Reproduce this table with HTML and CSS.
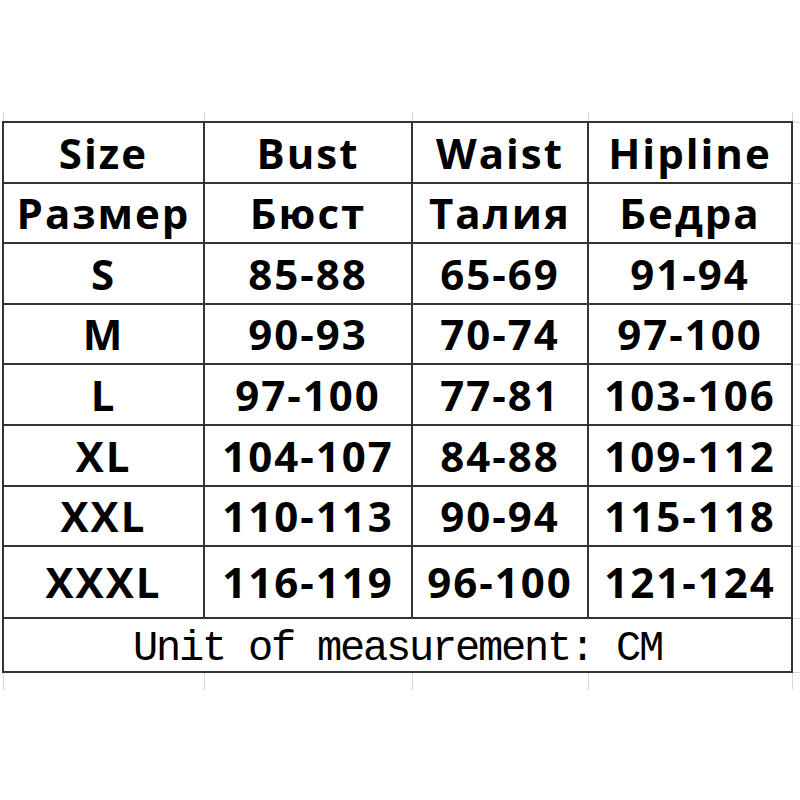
FILE: index.html
```html
<!DOCTYPE html>
<html>
<head>
<meta charset="utf-8">
<link rel="stylesheet" href="styles.css">
</head>
<body>
<div class="sheet">
  <div class="table">
    <div class="cell">Size</div><div class="cell">Bust</div><div class="cell">Waist</div><div class="cell">Hipline</div>
    <div class="cell">Размер</div><div class="cell">Бюст</div><div class="cell">Талия</div><div class="cell">Бедра</div>
    <div class="cell">S</div><div class="cell">85-88</div><div class="cell">65-69</div><div class="cell">91-94</div>
    <div class="cell">M</div><div class="cell">90-93</div><div class="cell">70-74</div><div class="cell">97-100</div>
    <div class="cell">L</div><div class="cell">97-100</div><div class="cell">77-81</div><div class="cell">103-106</div>
    <div class="cell">XL</div><div class="cell">104-107</div><div class="cell">84-88</div><div class="cell">109-112</div>
    <div class="cell">XXL</div><div class="cell">110-113</div><div class="cell">90-94</div><div class="cell">115-118</div>
    <div class="cell">XXXL</div><div class="cell">116-119</div><div class="cell">96-100</div><div class="cell">121-124</div>
    <div class="cell unit">Unit of measurement: CM</div>
  </div>
</div>
</body>
</html>
```

FILE: styles.css
```css
html, body {
  margin: 0;
  padding: 0;
  background: #fff;
}

.sheet {
  margin-top: 112px;
  width: 800px;
  height: 578px;
  padding-top: 9px;
  box-sizing: border-box;
  background-color: #fff;
  background-repeat: no-repeat;
  background-image:
    linear-gradient(#d8d8d8, #d8d8d8),
    linear-gradient(#d8d8d8, #d8d8d8),
    linear-gradient(#d8d8d8, #d8d8d8),
    linear-gradient(#d8d8d8, #d8d8d8),
    linear-gradient(#d8d8d8, #d8d8d8),
    linear-gradient(#d8d8d8, #d8d8d8),
    linear-gradient(#d8d8d8, #d8d8d8),
    linear-gradient(#d8d8d8, #d8d8d8),
    linear-gradient(#d8d8d8, #d8d8d8),
    linear-gradient(#d8d8d8, #d8d8d8),
    linear-gradient(#d8d8d8, #d8d8d8),
    linear-gradient(#d8d8d8, #d8d8d8),
    linear-gradient(#d8d8d8, #d8d8d8),
    linear-gradient(#d8d8d8, #d8d8d8),
    linear-gradient(#d8d8d8, #d8d8d8);
  background-size:
    1px 100%, 1px 100%, 1px 100%, 1px 100%, 1px 100%,
    8px 1px, 8px 1px, 8px 1px, 8px 1px, 8px 1px,
    8px 1px, 8px 1px, 8px 1px, 8px 1px, 8px 1px;
  background-position:
    3px 0, 204px 0, 412px 0, 588px 0, 792px 0,
    793px 10px, 793px 71px, 793px 131px, 793px 192px, 793px 252px,
    793px 313px, 793px 374px, 793px 434px, 793px 506px, 793px 560px;
}

.table {
  margin-left: 2px;
  width: 791px;
  display: grid;
  grid-template-columns: 199px 206px 174px 202px;
  grid-template-rows: 59px 58px 59px 58px 59px 59px 58px 70px 52px;
  gap: 2px;
  padding: 2px;
  box-sizing: border-box;
  background: #333;
}

.cell {
  background: #fff;
  display: flex;
  align-items: center;
  justify-content: center;
  font-family: "Open Sans", "Noto Sans", sans-serif;
  font-weight: 700;
  font-size: 42px;
  letter-spacing: 2px;
  color: #000;
  line-height: 1;
  white-space: nowrap;
}

.unit {
  grid-column: 1 / -1;
  font-family: "Liberation Mono", "DejaVu Sans Mono", monospace;
  font-weight: 400;
  font-size: 42px;
  letter-spacing: -2.2px;
  padding-top: 7px;
}
```
